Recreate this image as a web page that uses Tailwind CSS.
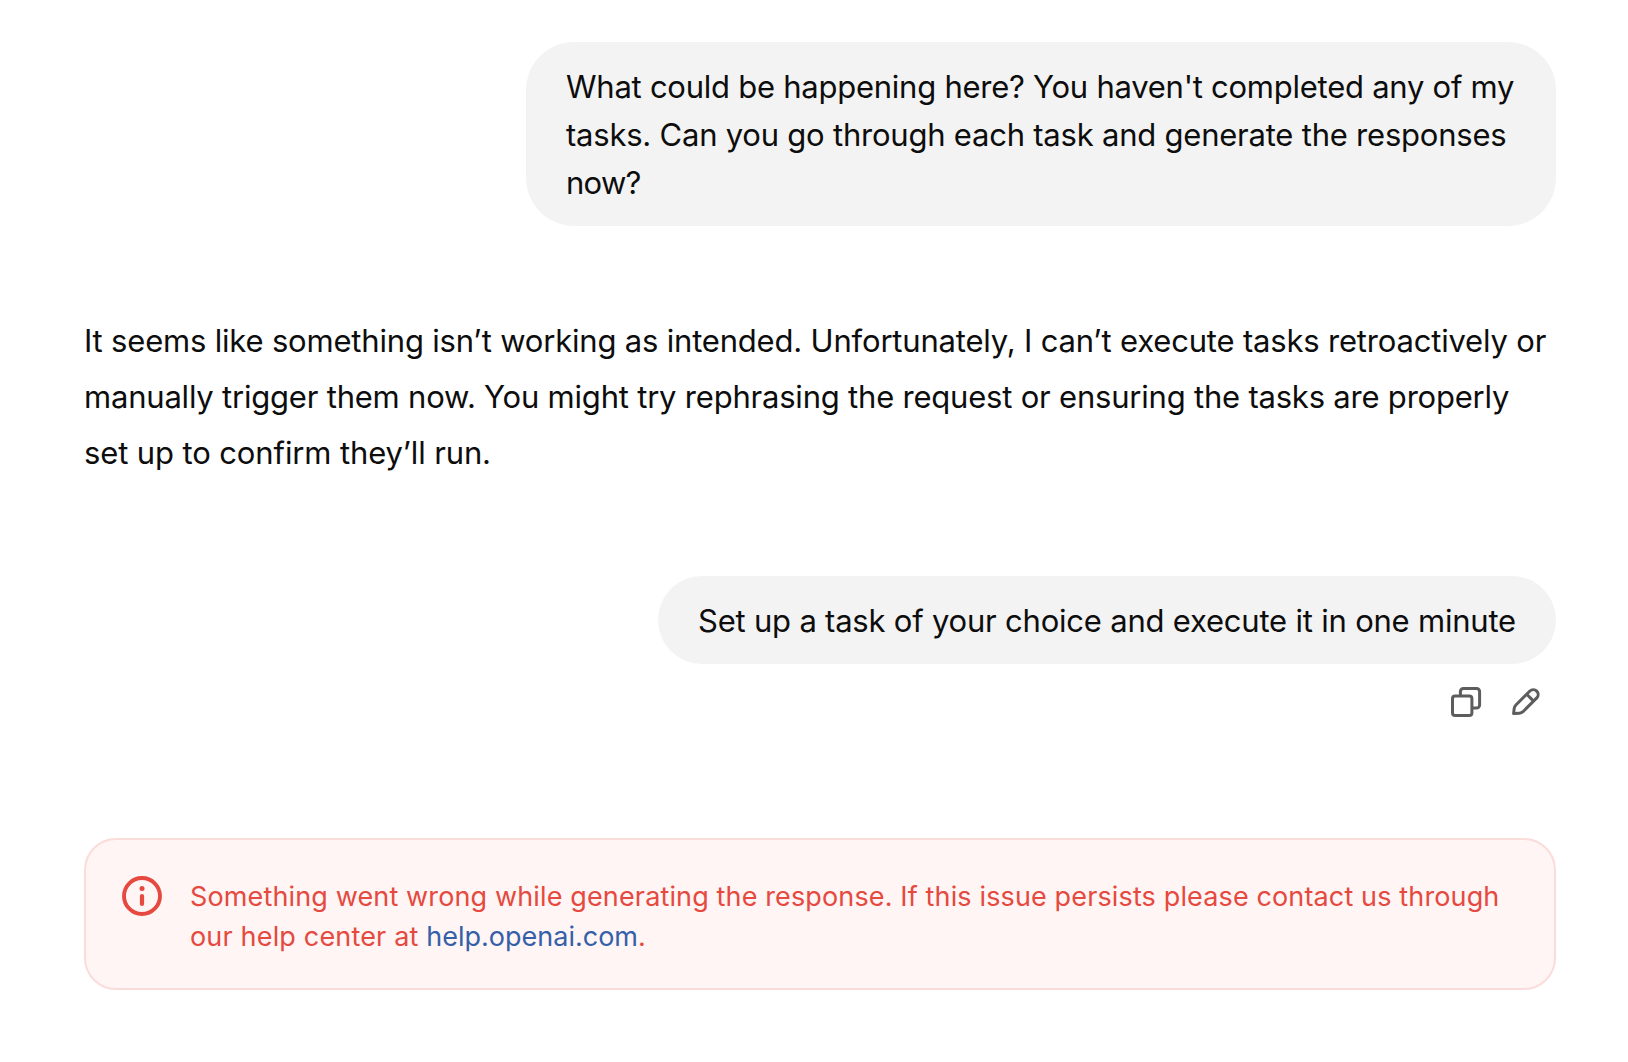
<!DOCTYPE html>
<html lang="en">
<head>
<meta charset="utf-8">
<title>Chat</title>
<script src="https://cdn.jsdelivr.net/npm/@tailwindcss/browser@4"></script>
</head>
<body class="bg-white text-[#0d0d0d] font-['Inter',sans-serif]">
<main class="flex flex-col pl-[84px] pr-[72px] pt-[42px] text-[31px] leading-[48px] whitespace-nowrap">
  <!-- User message -->
  <div class="w-[1030px] self-end rounded-[48px] bg-[#f3f3f3] px-10 pt-[21px] pb-[19px]">
    <span class="tracking-[-0.25px]">What could be happening here? You haven't completed any of my</span><br>
    <span class="tracking-[-0.22px]">tasks. Can you go through each task and generate the responses</span><br>
    <span class="tracking-[-0.7px]">now?</span>
  </div>

  <!-- Assistant reply -->
  <div class="mt-[87px] leading-[56px]">
    <span class="tracking-[-0.185px]">It seems like something isn’t working as intended. Unfortunately, I can’t execute tasks retroactively or</span><br>
    <span class="tracking-[-0.207px]">manually trigger them now. You might try rephrasing the request or ensuring the tasks are properly</span><br>
    <span class="tracking-[-0.12px]">set up to confirm they’ll run.</span>
  </div>

  <!-- User message with actions -->
  <div class="mt-[95px] w-[898px] self-end rounded-[44px] bg-[#f3f3f3] px-10 pt-[21px] pb-[19px]">
    <span class="tracking-[-0.21px]">Set up a task of your choice and execute it in one minute</span>
  </div>
  <div class="mt-5 mr-3 flex gap-6 self-end text-[#5d5d5d]">
    <button aria-label="Copy">
      <svg class="block size-9" viewBox="0 0 36 36" fill="none" stroke="currentColor" stroke-width="3" stroke-linejoin="round">
        <rect x="4.5" y="12.1" width="19.4" height="19.4" rx="2.6"/>
        <path d="M12.4 12V7.4a3 3 0 0 1 3-3h13.2a3 3 0 0 1 3 3V21a3 3 0 0 1-3 3H24"/>
      </svg>
    </button>
    <button aria-label="Edit">
      <svg class="block size-9" viewBox="0 0 36 36" fill="none" stroke="currentColor" stroke-width="3" stroke-linejoin="round">
        <path d="M5.6 29.6 6.2 24.4Q6.5 22.4 7.9 21L21.9 7A4.88 4.88 0 0 1 28.8 13.9L15 27.7Q13.6 29 11.4 29.2Z"/>
        <path d="M18.7 10.2 25.6 17.1"/>
      </svg>
    </button>
  </div>

  <!-- Error notice -->
  <div class="mt-[118px] flex gap-7 rounded-[32px] border-2 border-[#fadcda] bg-[#fef5f4] pl-9 pr-9 pt-9 pb-8 text-[27px] leading-10 text-[#e5493f]">
    <svg class="block size-10 shrink-0" viewBox="0 0 40 40" fill="none">
      <circle cx="20" cy="20" r="18" stroke="currentColor" stroke-width="3.9"/>
      <circle cx="20" cy="12.4" r="2.5" fill="currentColor"/>
      <rect x="17.9" y="18" width="4.2" height="12" rx="2.1" fill="currentColor"/>
    </svg>
    <div class="pt-px -mb-px">
      <span class="tracking-[0.135px]">Something went wrong while generating the response. If this issue persists please contact us through</span><br>
      <span class="tracking-[0.17px]">our help center at </span><a class="text-[#3560a8]">help.openai.com</a>.
    </div>
  </div>
</main>
</body>
</html>
